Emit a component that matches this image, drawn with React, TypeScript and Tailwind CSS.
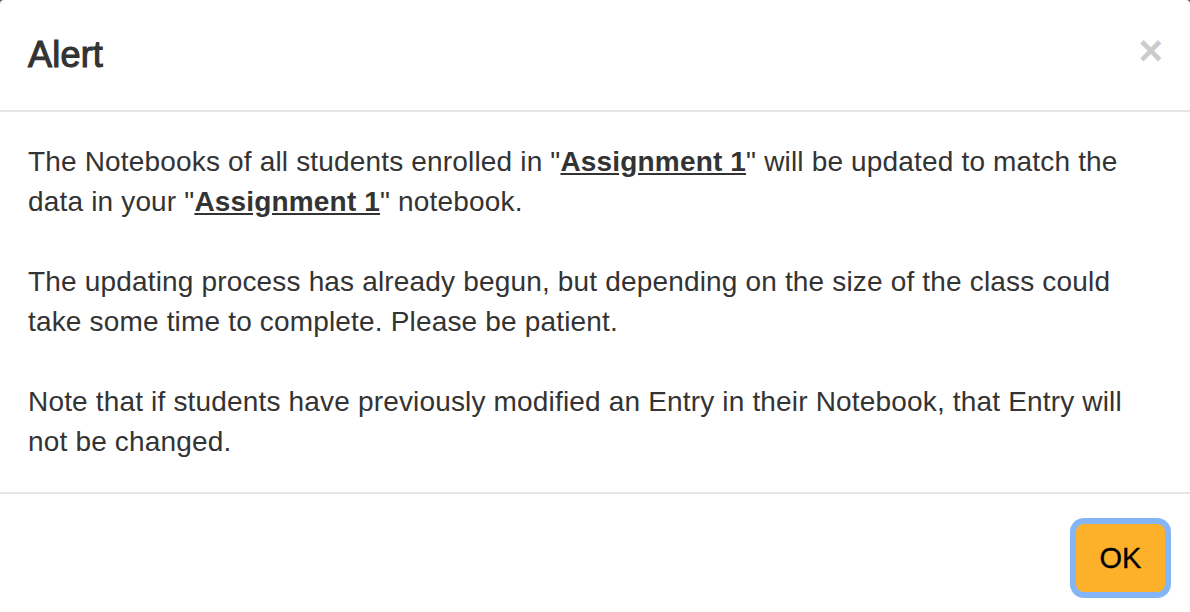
export default function App() {
  return (
    <div className="w-[1190px] h-[612px] overflow-hidden bg-[#5a5a5a] font-['Liberation_Sans',Arial,sans-serif] text-[#333]">
      <div className="bg-white rounded-[4px]">
        <div className="flex items-center justify-between pl-[28px] pr-[27px] py-[30px] border-b-2 border-[#e5e5e5]">
          <h4 className="text-[36px] leading-[50px] font-normal [-webkit-text-stroke:1.1px_#333] tracking-[0.2px] m-0">Alert</h4>
          <button className="text-[42px] leading-[42px] font-bold text-black opacity-20 -mt-[8px]">×</button>
        </div>
        <div className="px-[28px] py-[30px] text-[28px] leading-[40px] tracking-[0.17px]">
          <p>
            The Notebooks of all students enrolled in "<span className="font-bold underline">Assignment 1</span>" will be updated to match the data in your "<span className="font-bold underline">Assignment 1</span>" notebook.
          </p>
          <p className="mt-[40px]">
            The updating process has already begun, but depending on the size of the class could take some time to complete. Please be patient.
          </p>
          <p className="mt-[40px]">
            Note that if students have previously modified an Entry in their Notebook, that Entry will not be changed.
          </p>
        </div>
        <div className="flex justify-end pl-[30px] pr-[25px] py-[30px] border-t-2 border-[#e5e5e5]">
          <button className="h-[68px] w-[89px] rounded-[8px] bg-[#fdb02a] text-[29px] leading-[40px] text-black [-webkit-text-stroke:0.3px_#000] shadow-[0_0_0_6px_#84b5f7]">
            OK
          </button>
        </div>
      </div>
    </div>
  )
}
